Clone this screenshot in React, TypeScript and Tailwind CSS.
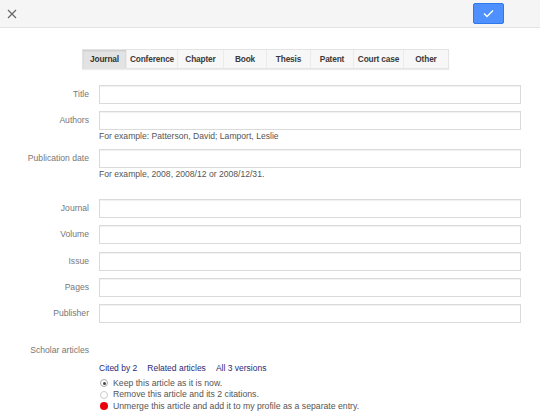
import React from 'react'

const tabs = ['Journal', 'Conference', 'Chapter', 'Book', 'Thesis', 'Patent', 'Court case', 'Other']
const tabWidths = ['w-[44px]', 'w-[51px]', 'w-[46px]', 'w-[43px]', 'w-[44px]', 'w-[43px]', 'w-[50px]', 'w-[44px]']

const Field = ({ label, hint, className = '' }: { label: string; hint?: string; className?: string }) => (
    <div className={className}>
        <div className="flex items-center h-[19px]">
            <div className="w-[90px] pr-px text-right text-[8.6px] text-[#777]">{label}</div>
            <div className="ml-[9px] w-[422px] h-[19px] border border-[#dadada] bg-white shadow-[inset_0_1px_1px_rgba(0,0,0,0.06)]" />
        </div>
        {hint && <div className="ml-[99px] mt-px h-[11px] leading-[11px] text-[8.6px] text-[#555]">{hint}</div>}
    </div>
)

const App: React.FC = () => {
    return (
        <div className="w-[540px] h-[415px] bg-white font-['Liberation_Sans',Arial,sans-serif] overflow-hidden">
            <div className="h-[28px] bg-[#f5f5f5] border-b border-[#e3e3e3] flex items-center justify-between">
                <svg className="ml-[7px] w-[10px] h-[10px]" viewBox="0 0 10 10">
                    <path d="M1 1 L9 9 M9 1 L1 9" stroke="#666" strokeWidth="1.2" />
                </svg>
                <div className="mr-[36px] w-[31px] h-[21px] rounded-[2px] bg-[#4d90fe] border border-[#3079ed] flex items-center justify-center">
                    <svg className="w-[11px] h-[9px]" viewBox="0 0 11 9">
                        <path d="M1 4.5 L4 7.5 L10 1.5" stroke="#fff" strokeWidth="1.4" fill="none" />
                    </svg>
                </div>
            </div>

            <div className="mt-[21px] ml-[82px] flex h-[20px] border border-[#e4e4e4] shadow-[0_1px_1px_rgba(0,0,0,0.08)] w-fit">
                {tabs.map((t, i) => (
                    <div
                        key={t}
                        className={`${tabWidths[i]} h-full flex items-center justify-center text-[8.3px] font-bold tracking-[-0.15px] text-[#3a3a3a] border-r border-[#ebebeb] last:border-r-0 ${i === 0 ? 'bg-[#e3e3e3] shadow-[inset_0_1px_2px_rgba(0,0,0,0.12)] text-[#333]' : 'bg-[#f7f7f7]'}`}
                    >
                        {t}
                    </div>
                ))}
            </div>

            <Field label="Title" className="mt-[16px]" />
            <Field label="Authors" hint="For example: Patterson, David; Lamport, Leslie" className="mt-[7px]" />
            <Field label="Publication date" hint="For example, 2008, 2008/12 or 2008/12/31." className="mt-[7px]" />
            <Field label="Journal" className="mt-[19px]" />
            <Field label="Volume" className="mt-[7px]" />
            <Field label="Issue" className="mt-[8px]" />
            <Field label="Pages" className="mt-[7px]" />
            <Field label="Publisher" className="mt-[7px]" />

            <div className="mt-[21px] flex">
                <div className="w-[89px] text-right text-[8.6px] text-[#777]">Scholar articles</div>
            </div>
            <div className="ml-[99px] mt-[5px] flex gap-[10px] text-[8.5px] text-[#2a2a7a]">
                <span>Cited by 2</span>
                <span>Related articles</span>
                <span>All 3 versions</span>
            </div>
            <div className="ml-[100px] mt-[3px] flex flex-col text-[8.7px] text-[#555]">
                <div className="flex items-center gap-[5px] h-[11.5px]">
                    <span className="w-[8px] h-[8px] rounded-full border border-[#aaa] bg-white flex items-center justify-center">
                        <span className="w-[3px] h-[3px] rounded-full bg-[#444]" />
                    </span>
                    Keep this article as it is now.
                </div>
                <div className="flex items-center gap-[5px] h-[11.5px]">
                    <span className="w-[8px] h-[8px] rounded-full border border-[#ccc] bg-white" />
                    Remove this article and its 2 citations.
                </div>
                <div className="flex items-center gap-[5px] h-[11.5px]">
                    <span className="w-[8px] h-[8px] rounded-full bg-[#e8000b]" />
                    Unmerge this article and add it to my profile as a separate entry.
                </div>
            </div>
        </div>
    )
}

export default App
